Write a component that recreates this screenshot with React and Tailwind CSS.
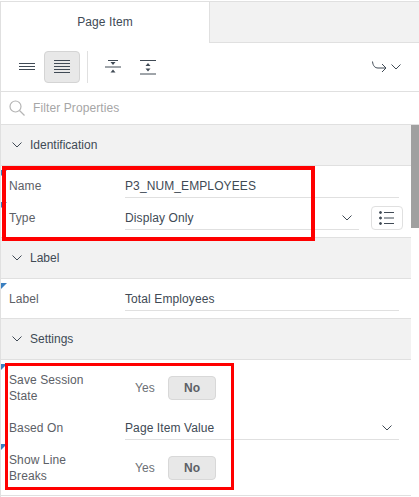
import React from "react";

const font = "font-['Liberation_Sans',Arial,sans-serif]";

const Chevron = ({ className = "" }) => (
  <svg className={className} width="10" height="6" viewBox="0 0 10 6" fill="none" stroke="#404a55" strokeWidth="1">
    <path d="M.5 .5 L5 5 L9.5 .5" />
  </svg>
);

const SectionHeader = ({ title }) => (
  <div className="h-[41px] flex items-center bg-[#f2f2f2] border-b border-[#e0e0e0] pl-[11px] text-xs text-[#404a55]">
    <Chevron className="mr-[8px]" />
    {title}
  </div>
);

const Marker = () => (
  <div className="absolute left-0 top-[4px] w-0 h-0 border-t-[6px] border-r-[6px] border-t-[#3a7fc0] border-r-transparent" />
);

const TextRow = ({ label, value, marker, select, extra }) => (
  <div className="relative flex h-8">
    {marker && <Marker />}
    <div className="w-[124px] pl-[8px] flex items-end pb-[4px] text-xs leading-4 text-[#5c6066] tracking-[0.1px]">{label}</div>
    <div className={`flex items-end justify-between border-b border-[#e0e0e0] pb-[3px] text-xs leading-4 text-[#404a55] tracking-[0.1px] ${extra ? "w-[234px]" : "w-[274px]"}`}>
      {value}
      {select && <Chevron className="mr-[7px] mb-[5px]" />}
    </div>
    {extra}
  </div>
);

const YesNoRow = ({ label, marker }) => (
  <div className="relative flex items-center h-[48px] pt-2">
    {marker && <Marker />}
    <div className="w-[124px] pl-[8px] text-xs leading-4 text-[#5c6066] tracking-[0.1px]">{label}</div>
    <div className="w-[43px] pl-[10px] text-xs text-[#6b6f75] tracking-[0.1px]">Yes</div>
    <div className="w-[48px] h-[24px] flex items-center justify-center bg-[#e8e8e8] border border-[#d8d8d8] rounded-sm text-xs font-bold text-[#5c6066]">
      No
    </div>
  </div>
);

const ListIcon = () => (
  <svg width="16" height="14" viewBox="0 0 16 14" fill="#404a55" stroke="#404a55">
    <circle cx="1.5" cy="1.5" r="1" />
    <circle cx="1.5" cy="7" r="1" />
    <circle cx="1.5" cy="12.5" r="1" />
    <path d="M5 1.5H15M5 7H15M5 12.5H15" fill="none" />
  </svg>
);

const App = () => {
  return (
    <div className={`relative w-[419px] h-[497px] overflow-hidden bg-white pt-px ${font}`}>
      <div className="border-l border-[#e0e0e0] h-[496px]">
        {/* tabs */}
        <div className="flex h-[42px] border-t border-[#e0e0e0]">
          <div className="w-[209px] flex items-center justify-center pb-[1px] border-r border-[#e0e0e0] text-xs text-[#404a55] tracking-[0.1px]">
            Page Item
          </div>
          <div className="flex-1 bg-[#f2f2f2] border-b border-[#e0e0e0]" />
        </div>

        {/* toolbar */}
        <div className="h-[49px] flex items-center border-b border-[#e0e0e0] pr-[18px]">
          <div className="w-[43px] pl-[18px]">
            <svg className="block" width="16" height="8" viewBox="0 0 16 8" stroke="#404a55">
              <path d="M0 .5H16M0 3.5H16M0 6.5H16" />
            </svg>
          </div>
          <div className="w-[36px] h-[32px] flex items-center justify-center bg-[#e8e8e8] border border-[#d4d4d4] rounded-sm">
            <svg width="16" height="14" viewBox="0 0 16 14" stroke="#404a55">
              <path d="M0 .5H16M0 3.5H16M0 6.5H16M0 9.5H16M0 12.5H16" />
            </svg>
          </div>
          <div className="ml-[7px] w-px h-[32px] bg-[#e0e0e0]" />
          <div className="ml-[17px]">
            <svg className="block" width="16" height="14" viewBox="0 0 16 14" fill="#404a55" stroke="#404a55">
              <path d="M0 7H16M3 .5H13" fill="none" />
              <path d="M5.5 2 H10.5 L8 5 Z M5.5 12.5 H10.5 L8 9.5 Z" stroke="none" />
            </svg>
          </div>
          <div className="ml-[19px]">
            <svg className="block" width="16" height="15" viewBox="0 0 16 15" fill="#404a55" stroke="#404a55">
              <path d="M0 .5H16M0 14H16" fill="none" />
              <path d="M5.5 6 H10.5 L8 3 Z M5.5 8.5 H10.5 L8 11.5 Z" stroke="none" />
            </svg>
          </div>
          <div className="ml-auto flex items-center gap-[4px]">
            <svg className="block" width="15" height="13" viewBox="0 0 15 13" fill="none" stroke="#404a55">
              <path d="M.5 .5 C1 5 3 7 6 7 H14 M10 3 L14 7 L10 11" />
            </svg>
            <Chevron />
          </div>
        </div>

        {/* filter */}
        <div className="h-[33px] flex items-center border-b border-[#e0e0e0] pl-[8px]">
          <svg width="16" height="16" viewBox="0 0 16 16" fill="none" stroke="#b5b5b5" strokeWidth="1.2">
            <circle cx="6.5" cy="6.5" r="5.5" />
            <path d="M10.5 10.5 L15.5 15.5" />
          </svg>
          <span className="ml-[8px] text-xs text-[#a6a6a6] tracking-[0.1px]">Filter Properties</span>
        </div>

        {/* properties */}
        <div className="relative">
          <div className="w-[410px]">
            <SectionHeader title="Identification" />
            <TextRow label="Name" value="P3_NUM_EMPLOYEES" marker />
            <TextRow
              label="Type"
              value="Display Only"
              marker
              select
              extra={
                <button className="ml-[12px] mt-2 w-[32px] h-[24px] flex items-center justify-center border border-[#e0e0e0] rounded-sm">
                  <ListIcon />
                </button>
              }
            />
            <div className="h-2 border-b border-[#e0e0e0]" />
            <SectionHeader title="Label" />
            <TextRow label="Label" value="Total Employees" marker />
            <div className="h-2 border-b border-[#e0e0e0]" />
            <SectionHeader title="Settings" />
            <YesNoRow label={<>Save Session<br />State</>} marker />
            <TextRow label="Based On" value="Page Item Value" select />
            <YesNoRow label={<>Show Line<br />Breaks</>} marker />
            <div className="h-2 border-b border-[#e0e0e0]" />
          </div>
          <div className="absolute right-0 top-0 w-[8px] h-[103px] bg-[#a0a0a0]" />
        </div>
      </div>

      {/* red annotation boxes */}
      <div className="absolute left-[2px] top-[166px] w-[313px] h-[75px] border-4 border-[#ff0000]" />
      <div className="absolute left-[5px] top-[363px] w-[229px] h-[127px] border-[3px] border-[#ff0000]" />
    </div>
  );
};

export default App;
